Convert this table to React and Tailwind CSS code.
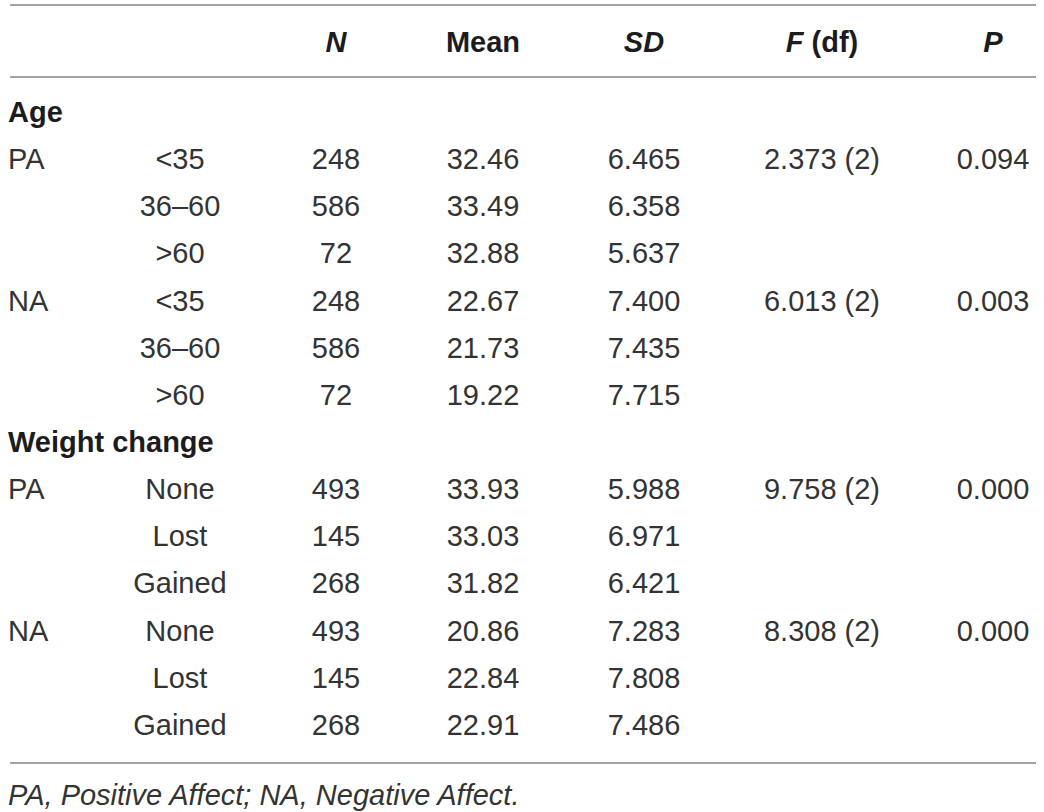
import React from "react";

const font = { fontFamily: '"Liberation Sans", Arial, sans-serif' };

const groups = [
  {
    title: "Age",
    blocks: [
      {
        label: "PA",
        f: "2.373 (2)",
        p: "0.094",
        rows: [
          ["<35", "248", "32.46", "6.465"],
          ["36–60", "586", "33.49", "6.358"],
          [">60", "72", "32.88", "5.637"],
        ],
      },
      {
        label: "NA",
        f: "6.013 (2)",
        p: "0.003",
        rows: [
          ["<35", "248", "22.67", "7.400"],
          ["36–60", "586", "21.73", "7.435"],
          [">60", "72", "19.22", "7.715"],
        ],
      },
    ],
  },
  {
    title: "Weight change",
    blocks: [
      {
        label: "PA",
        f: "9.758 (2)",
        p: "0.000",
        rows: [
          ["None", "493", "33.93", "5.988"],
          ["Lost", "145", "33.03", "6.971"],
          ["Gained", "268", "31.82", "6.421"],
        ],
      },
      {
        label: "NA",
        f: "8.308 (2)",
        p: "0.000",
        rows: [
          ["None", "493", "20.86", "7.283"],
          ["Lost", "145", "22.84", "7.808"],
          ["Gained", "268", "22.91", "7.486"],
        ],
      },
    ],
  },
];

const cols = "grid grid-cols-[52px_240px_72px_222px_100px_256px_86px]";

function Row({ cells }) {
  return (
    <div className={`${cols} h-[47.15px] leading-[47px] text-[#333333]`}>
      <div className="text-left">{cells[0]}</div>
      <div className="text-center">{cells[1]}</div>
      <div className="text-center">{cells[2]}</div>
      <div className="text-center">{cells[3]}</div>
      <div className="text-center">{cells[4]}</div>
      <div className="text-center">{cells[5]}</div>
      <div className="text-center">{cells[6]}</div>
    </div>
  );
}

export default function App() {
  return (
    <div className="w-[1044px] h-[812px] bg-white overflow-hidden text-[29px]" style={font}>
      <div className="pl-[8px] pr-[8px]">
        <div className="h-[4px]" />
        <div className="ml-[2px] h-[2px] bg-[#a3a3a3]" />
        <div className={`${cols} h-[70px] leading-[72px] font-bold text-[#1c1c1c]`}>
          <div />
          <div />
          <div className="text-center italic">N</div>
          <div className="text-center">Mean</div>
          <div className="text-center italic">SD</div>
          <div className="text-center">
            <span className="italic">F</span> (df)
          </div>
          <div className="text-center italic">P</div>
        </div>
        <div className="ml-[2px] h-[2px] bg-[#a3a3a3]" />
        <div className="h-[11px]" />
        {groups.map((g) => (
          <div key={g.title}>
            <div className="h-[47.15px] leading-[47px] font-bold text-[#1c1c1c]">{g.title}</div>
            {g.blocks.map((b) =>
              b.rows.map((r, i) => (
                <Row
                  key={b.label + i}
                  cells={[
                    i === 0 ? b.label : "",
                    r[0],
                    r[1],
                    r[2],
                    r[3],
                    i === 0 ? b.f : "",
                    i === 0 ? b.p : "",
                  ]}
                />
              ))
            )}
          </div>
        ))}
        <div className="h-[13px]" />
        <div className="ml-[2px] h-[2px] bg-[#a3a3a3]" />
        <div className="pt-[8px] leading-[47px] italic text-[#333333]">
          PA, Positive Affect; NA, Negative Affect.
        </div>
      </div>
    </div>
  );
}
